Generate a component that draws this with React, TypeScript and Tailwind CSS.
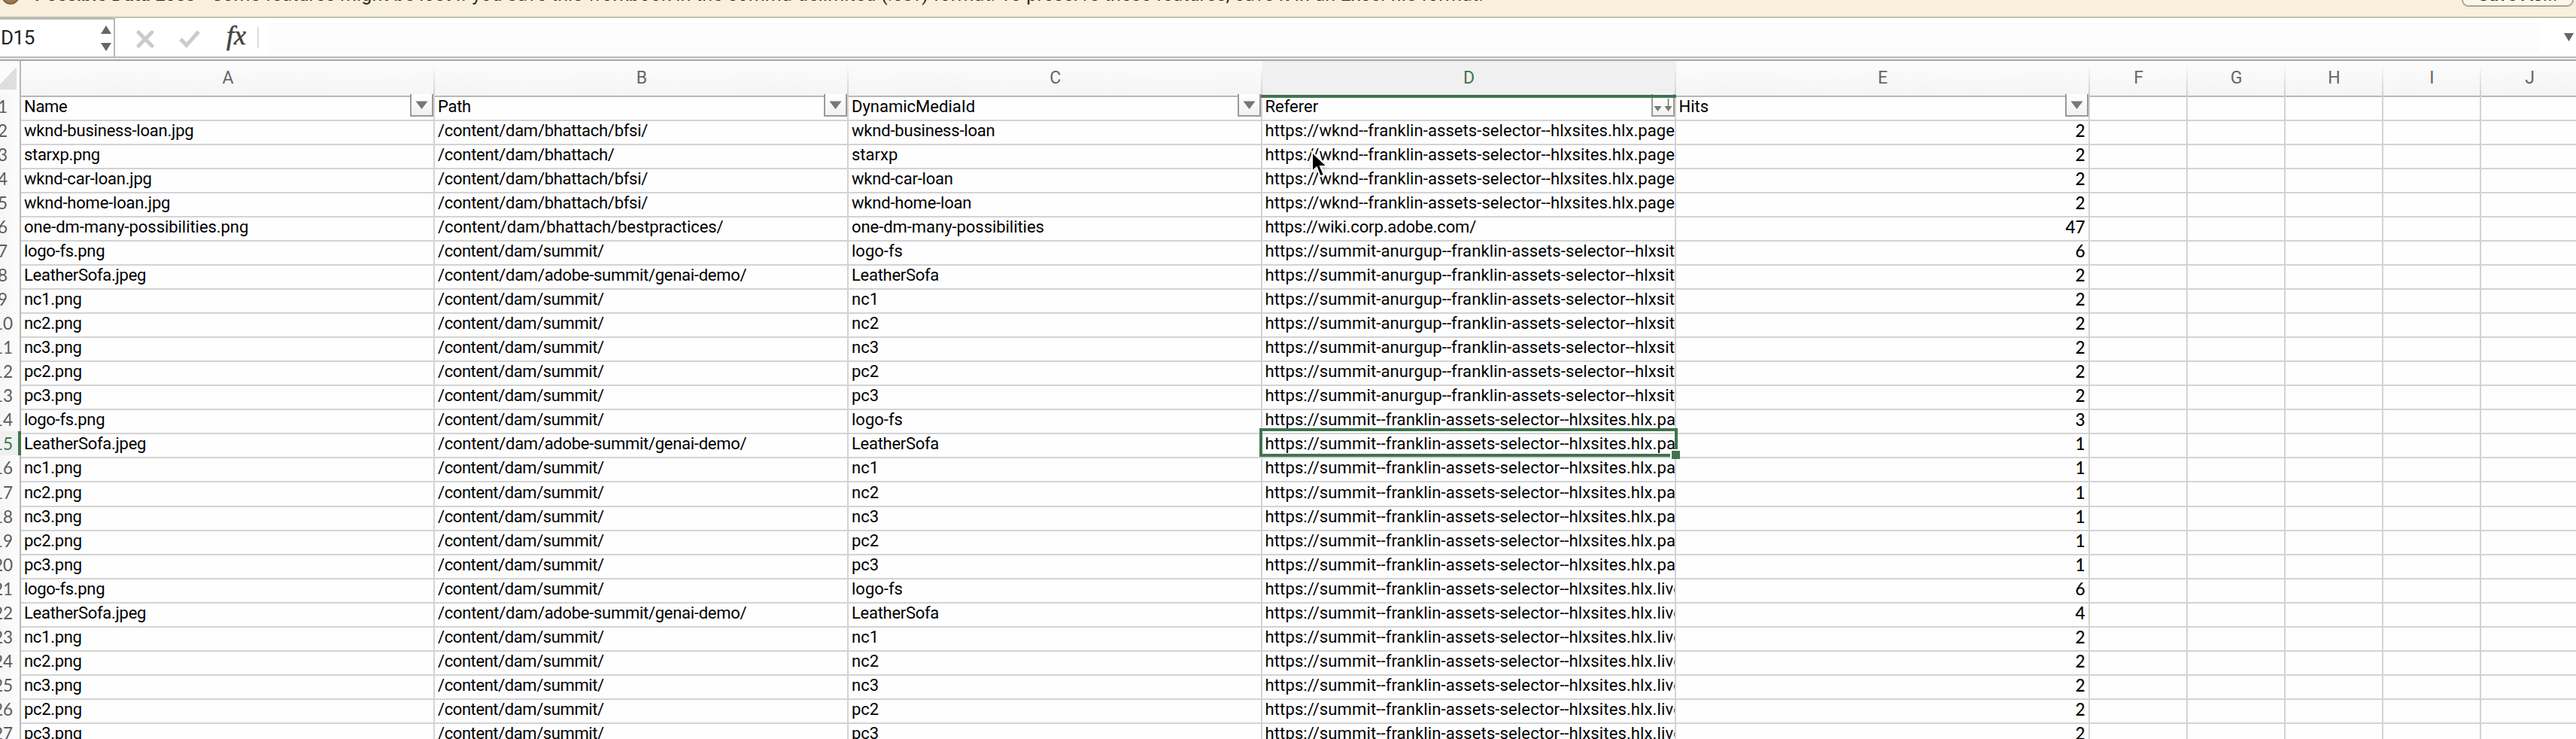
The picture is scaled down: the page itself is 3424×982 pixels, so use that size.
import React from "react";

const files = ["logo-fs.png", "LeatherSofa.jpeg", "nc1.png", "nc2.png", "nc3.png", "pc2.png", "pc3.png"];
type Row = [string, string, string, string, number];

const wknd = "https://wknd--franklin-assets-selector--hlxsites.hlx.page";
const group = (url: string, hits: number[]): Row[] =>
  files.map((f, i) => [
    f,
    i === 1 ? "/content/dam/adobe-summit/genai-demo/" : "/content/dam/summit/",
    f.split(".")[0],
    url,
    hits[i],
  ]);

const rows: Row[] = [
  ["wknd-business-loan.jpg", "/content/dam/bhattach/bfsi/", "wknd-business-loan", wknd, 2],
  ["starxp.png", "/content/dam/bhattach/", "starxp", wknd, 2],
  ["wknd-car-loan.jpg", "/content/dam/bhattach/bfsi/", "wknd-car-loan", wknd, 2],
  ["wknd-home-loan.jpg", "/content/dam/bhattach/bfsi/", "wknd-home-loan", wknd, 2],
  ["one-dm-many-possibilities.png", "/content/dam/bhattach/bestpractices/", "one-dm-many-possibilities", "https://wiki.corp.adobe.com/", 47],
  ...group("https://summit-anurgup--franklin-assets-selector--hlxsit", [6, 2, 2, 2, 2, 2, 2]),
  ...group("https://summit--franklin-assets-selector--hlxsites.hlx.pa", [3, 1, 1, 1, 1, 1, 1]),
  ...group("https://summit--franklin-assets-selector--hlxsites.hlx.live", [6, 4, 2, 2, 2, 2, 2]),
];

const letters = ["A", "B", "C", "D", "E", "F", "G", "H", "I", "J"];
const grid = "grid grid-cols-[28px_550px_550px_549.5px_550px_550px_130px_130px_130px_130px_130px] w-[3428px]";

function tracking(text: string | number | undefined) {
  if (typeof text !== "string") return "";
  if (text.startsWith("/content/dam/summit")) return "tracking-[-0.42px]";
  if (text.startsWith("/content/dam/bhattach/best")) return "tracking-[-0.08px]";
  if (text.startsWith("/content")) return "tracking-[-0.28px]";
  if (text.startsWith("https://summit")) return "tracking-[0.13px]";
  if (text.startsWith("https://wknd")) return "tracking-[0.08px]";
  if (text.startsWith("wknd")) return "tracking-[-0.2px]";
  if (text.startsWith("https://wiki")) return "tracking-[-0.13px]";
  if (text.startsWith("one-dm")) return "tracking-[-0.05px]";
  if (text.startsWith("Leather")) return "tracking-[-0.28px]";
  if (text.endsWith("png") || text === "Path" || text === "Name") return "tracking-[-0.3px]";
  return "";
}

function Filter({ sorted }: { sorted?: boolean }) {
  return (
    <div className="absolute right-0 top-0 h-[30px] w-[31px] border-2 border-t-0 border-[#9a9a9a] bg-gradient-to-b from-white to-[#f1f1f1]">
      {sorted ? (
        <svg className="h-full w-full" viewBox="0 0 27 28">
          <path d="M1.5 16h10l-5 7zM15.500 16h10l-5 7z" fill="#777" />
          <path d="M20.500 6v12" stroke="#777" strokeWidth="1.600" />
        </svg>
      ) : (
        <svg className="h-full w-full" viewBox="0 0 27 28">
          <path d="M5.500 9.500h16l-8 10.500z" fill="#777" />
        </svg>
      )}
    </div>
  );
}

function SheetRow({ n, cells }: { n: number; cells: (string | number)[] }) {
  const active = n === 15;
  const pad = n < 10 ? "pr-[16px]" : active ? "pr-[7px]" : "pr-[9px]";
  return (
    <div className={`${grid} h-[32.04px] shrink-0 text-[22px] leading-[32px] text-black`}>
      <div
        className={`flex justify-end overflow-hidden border-b-2 border-b-[#dedede] pt-px font-[Lato,sans-serif] text-[22.5px] ${pad} ${
          active ? "border-r-4 border-r-[#41744f] bg-[#f0f0f0] text-[#41744f]" : "border-r-2 border-r-[#b8b8b8] bg-gradient-to-r from-[#f6f6f6] to-[#fdfdfd] text-[#5c5c5c]"
        }`}
      >
        {n}
      </div>
      {letters.map((l, i) => (
        <div key={l} className="relative min-w-0 border-b-2 border-r-2 border-[#d3d3d3]">
          <div
            className={`h-[34px] overflow-hidden whitespace-nowrap pt-px ${
              typeof cells[i] === "number" ? "pr-1 text-right font-[Lato,sans-serif] text-[22.5px] font-medium" : "pl-[4px]"
            } ${tracking(cells[i])}`}
          >
            {cells[i]}
          </div>
          {n === 1 && i < 5 && <Filter sorted={i === 3} />}
          {active && i === 3 && (
            <div className="absolute -left-[4px] -right-[4px] -top-[4px] z-10 h-[38px] border-[4px] border-[#41744f]">
              <div className="absolute -bottom-[7px] -right-[7px] h-[13px] w-[13px] border-l-2 border-t-2 border-white bg-[#41744f]" />
            </div>
          )}
        </div>
      ))}
    </div>
  );
}

export default function App() {
  return (
    <div className="relative flex h-[982px] w-[3424px] flex-col overflow-hidden bg-[#fefefe] font-[Roboto,sans-serif]">
      <div className="h-[24px] shrink-0 overflow-hidden border-b-2 border-[#c5c1b5] bg-[#f8f0dc]">
        <div className="-mt-[20px] flex items-start justify-between">
          <div className="flex items-start">
            <div className="ml-[2px] mt-[2px] h-[24px] w-[24px] rounded-full border-2 border-[#83633d] bg-[#9c7b52]" />
            <div className="ml-[20px] flex whitespace-nowrap text-[25px] leading-[26px] text-[#2a2720]">
              <b className="w-[235px] font-medium">Possible Data Loss</b>
              <span className="tracking-[0.19px]">Some features might be lost if you save this workbook in the comma-delimited (.csv) format. To preserve these features, save it in an Excel file format.</span>
            </div>
          </div>
          <div className="mr-[3px] h-[29px] w-[149px] rounded-[9px] border-2 border-[#aaa595] bg-[#fbf6e8] text-center text-[24px] font-medium leading-[22px] text-[#2a2720]">Save As...</div>
        </div>
      </div>
      <div className="flex h-[53px] shrink-0 items-center border-b-2 border-[#bcbcbc] bg-white">
        <div className="flex h-full w-[153px] items-center justify-between border-r-2 border-t-2 border-[#b8b8b8] pl-px pr-[3px] text-[26px] tracking-[-0.5px] text-[#222]">
          <span>D15</span>
          <svg width="14" height="36" viewBox="0 0 14 36"><path d="M7 1l7 11H0zM7 35l7-11H0z" fill="#666" /></svg>
        </div>
        <svg width="204" height="51" viewBox="0 0 204 51" fill="none">
          <path d="M31 19l18 18M49 19L31 37" stroke="#cbcbcb" strokeWidth="5" strokeLinecap="round" />
          <path d="M87 28l8 8 16-18" stroke="#cbcbcb" strokeWidth="5" />
          <path d="M190 12v28" stroke="#ddd" strokeWidth="2" />
          <text x="148" y="35" fontFamily="Liberation Serif" fontStyle="italic" fontSize="36" fill="#444" stroke="#444" strokeWidth=".6">fx</text>
        </svg>
        <div className="h-[40px] flex-1 bg-[#fcfcfc]" />
        <div className="flex w-[48px] justify-end pr-[3px]">
          <svg width="13" height="11" viewBox="0 0 13 11"><path d="M0 0h13L6.500 11z" fill="#666" /></svg>
        </div>
      </div>
      <div className="h-[4px] shrink-0 border-b-2 border-[#a8a8a8] bg-[#ececec]" />
      <div className={`${grid} h-[44px] shrink-0 text-[23px] leading-[46px] text-[#666]`}>
        <div className="border-b-2 border-r-2 border-[#b8b8b8] bg-[#fbfbfb]">
          <svg width="26" height="42" viewBox="0 0 26 42"><path d="M22 8v30H0V31z" fill="#dedede" /></svg>
        </div>
        {letters.map((l) => (
          <div
            key={l}
            className={`relative flex justify-center ${l === "D" ? "bg-[#f0f0f0] text-[#41744f]" : "border-b-2 border-[#b8b8b8] bg-gradient-to-b from-[#fcfcfc] to-[#f5f5f5]"}`}
          >
            {l}
            <div className="absolute bottom-0 right-0 h-[40px] w-[2px] bg-gradient-to-b from-transparent to-[#d0d0d0]" />
            {l === "D" && <div className="absolute -bottom-px -left-[2px] right-0 z-10 h-[4px] bg-[#41744f]" />}
          </div>
        ))}
      </div>
      <SheetRow n={1} cells={["Name", "Path", "DynamicMediaId", "Referer", "Hits"]} />
      {rows.map((r, i) => (
        <SheetRow key={i} n={i + 2} cells={r} />
      ))}
      <svg className="absolute left-[1742px] top-[200px] z-20 drop-shadow-md" width="26" height="40" viewBox="0 0 26 40">
        <path d="M2 2v26l6-5.500 5 12 5-2-5-11.500h9z" fill="#000" stroke="#fff" strokeWidth="2" />
      </svg>
    </div>
  );
}
